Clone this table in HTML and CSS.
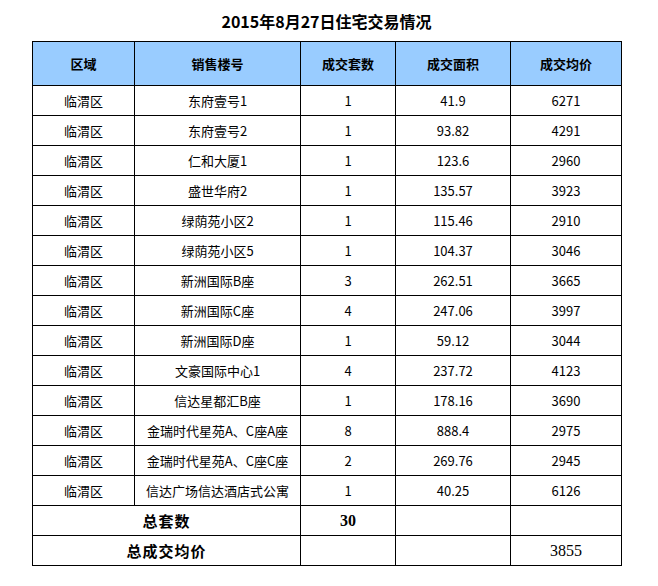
FILE: index.html
```html
<!DOCTYPE html>
<html lang="zh-CN">
<head>
<meta charset="utf-8">
<title>2015年8月27日住宅交易情况</title>
<link rel="stylesheet" href="styles.css">
</head>
<body>
<div class="page">
  <h1 class="title">2015年8月27日住宅交易情况</h1>
  <table class="deals">
    <colgroup>
      <col class="c1"><col class="c2"><col class="c3"><col class="c4"><col class="c5">
    </colgroup>
    <thead>
      <tr class="head"><th>区域</th><th>销售楼号</th><th>成交套数</th><th>成交面积</th><th>成交均价</th></tr>
    </thead>
    <tbody>
      <tr><td>临渭区</td><td>东府壹号1</td><td>1</td><td>41.9</td><td>6271</td></tr>
      <tr><td>临渭区</td><td>东府壹号2</td><td>1</td><td>93.82</td><td>4291</td></tr>
      <tr><td>临渭区</td><td>仁和大厦1</td><td>1</td><td>123.6</td><td>2960</td></tr>
      <tr><td>临渭区</td><td>盛世华府2</td><td>1</td><td>135.57</td><td>3923</td></tr>
      <tr><td>临渭区</td><td>绿荫苑小区2</td><td>1</td><td>115.46</td><td>2910</td></tr>
      <tr><td>临渭区</td><td>绿荫苑小区5</td><td>1</td><td>104.37</td><td>3046</td></tr>
      <tr><td>临渭区</td><td>新洲国际B座</td><td>3</td><td>262.51</td><td>3665</td></tr>
      <tr><td>临渭区</td><td>新洲国际C座</td><td>4</td><td>247.06</td><td>3997</td></tr>
      <tr><td>临渭区</td><td>新洲国际D座</td><td>1</td><td>59.12</td><td>3044</td></tr>
      <tr><td>临渭区</td><td>文豪国际中心1</td><td>4</td><td>237.72</td><td>4123</td></tr>
      <tr><td>临渭区</td><td>信达星都汇B座</td><td>1</td><td>178.16</td><td>3690</td></tr>
      <tr><td>临渭区</td><td>金瑞时代星苑A、C座A座</td><td>8</td><td>888.4</td><td>2975</td></tr>
      <tr><td>临渭区</td><td>金瑞时代星苑A、C座C座</td><td>2</td><td>269.76</td><td>2945</td></tr>
      <tr><td>临渭区</td><td>信达广场信达酒店式公寓</td><td>1</td><td>40.25</td><td>6126</td></tr>
      <tr class="sum"><td colspan="2" class="label">总套数</td><td class="num bold">30</td><td></td><td></td></tr>
      <tr class="sum"><td colspan="2" class="label">总成交均价</td><td></td><td></td><td class="num">3855</td></tr>
    </tbody>
  </table>
</div>
</body>
</html>
```

FILE: styles.css
```css
html, body {
  margin: 0;
  padding: 0;
  background: #fff;
}
.page {
  padding: 0 0 0 32px;
  font-family: "Noto Sans CJK SC", "Noto Sans", sans-serif;
  color: #000;
}
.title {
  margin: 0;
  width: 589px;
  height: 41px;
  box-sizing: border-box;
  padding-top: 10px;
  text-align: center;
  font-size: 16px;
  line-height: 22px;
  font-weight: 700;
}
.deals {
  border-collapse: collapse;
  table-layout: fixed;
  width: 589px;
}
.c1 { width: 102px; }
.c2 { width: 166px; }
.c3 { width: 95px; }
.c4 { width: 115px; }
.c5 { width: 111px; }
.deals th, .deals td {
  border: 1px solid #000;
  padding: 0;
  text-align: center;
  vertical-align: middle;
  font-size: 13px;
  line-height: 16px;
  height: 29px;
  white-space: nowrap;
}
.head th {
  background: #99ccff;
  height: 43px;
  font-weight: 700;
}
.sum .label {
  font-size: 15px;
  font-weight: 700;
  letter-spacing: 1px;
}
.sum .num {
  font-family: "Liberation Serif", serif;
  font-size: 16px;
}
.sum .bold {
  font-weight: 700;
}
```
